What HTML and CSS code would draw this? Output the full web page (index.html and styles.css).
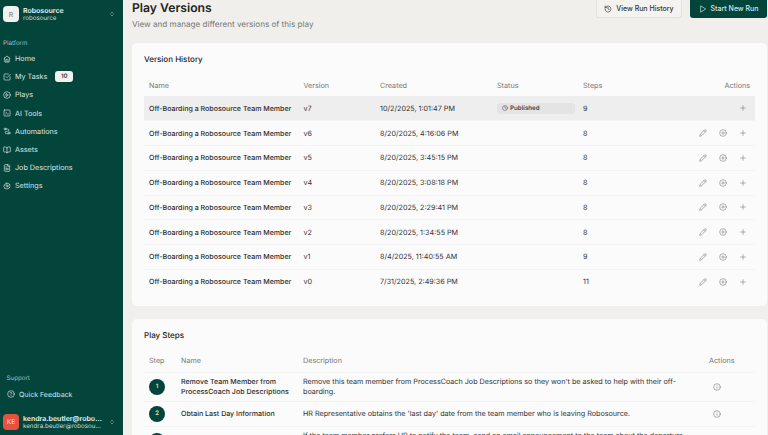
FILE: index.html
```html
<!DOCTYPE html>
<html lang="en">
<head>
  <meta charset="UTF-8" />
  <meta name="viewport" content="width=device-width,initial-scale=1.0" />
  <title>Play Versions</title>
  <link rel="stylesheet" href="styles.css">
</head>
<body>
  <svg class="icon-defs" width="0" height="0">
    <defs>
      <g id="i-home"><path d="M3 10.500 12 3l9 7.500"/><path d="M5 9v11a1 1 0 0 0 1 1h12a1 1 0 0 0 1-1V9"/><path d="M9 21v-7a1 1 0 0 1 1-1h4a1 1 0 0 1 1 1v7"/></g>
      <g id="i-tasks"><path d="M21 11v8a2 2 0 0 1-2 2H5a2 2 0 0 1-2-2V5a2 2 0 0 1 2-2h11"/><path d="m9 11 3 3L22 4"/></g>
      <g id="i-play-circle"><circle cx="12" cy="12" r="10"/><path d="m10 8 6 4-6 4z"/></g>
      <g id="i-tools"><rect x="3" y="3" width="18" height="18" rx="2"/><path d="m8 9 3 3-3 3"/><path d="M13 15h3"/></g>
      <g id="i-auto"><circle cx="6" cy="6" r="3"/><circle cx="18" cy="18" r="3"/><path d="M9 6h5a3.500 3.500 0 0 1 0 7h-4a3.500 3.500 0 0 0 0 7h5"/></g>
      <g id="i-book"><path d="M12 7v14"/><path d="M3 18a1 1 0 0 1-1-1V4a1 1 0 0 1 1-1h5a4 4 0 0 1 4 4 4 4 0 0 1 4-4h5a1 1 0 0 1 1 1v13a1 1 0 0 1-1 1h-6a3 3 0 0 0-3 3 3 3 0 0 0-3-3z"/></g>
      <g id="i-file"><path d="M15 2H6a2 2 0 0 0-2 2v16a2 2 0 0 0 2 2h12a2 2 0 0 0 2-2V7z"/><path d="M14 2v5h6"/><path d="M8 13h8M8 17h8M8 9h2"/></g>
      <g id="i-gear"><circle cx="12" cy="12" r="3"/><path d="M12 2.500l2 2.500 3-1 1 3 3 1-1 3 1.500 2-2.500 2 .5 3-3 .5-1.500 2.500-3-1.500-3 1.500L7 19.500l-3-.5.5-3L2.500 14 4 12 3 9l3-1 1-3 3 1z"/></g>
      <g id="i-help"><circle cx="12" cy="12" r="10"/><path d="M9.100 9a3 3 0 0 1 5.800 1c0 2-3 3-3 3"/><path d="M12 17h.01"/></g>
      <g id="i-updown"><path d="m7 9 5-5 5 5"/><path d="m7 15 5 5 5-5"/></g>
      <g id="i-history"><path d="M3 12a9 9 0 1 0 3-6.700L3 8"/><path d="M3 3v5h5"/><path d="M12 7v5l4 2"/></g>
      <g id="i-play"><path d="m6 3 14 9-14 9z"/></g>
      <g id="i-pencil"><path d="M17 3a2.800 2.800 0 0 1 4 4L7.500 20.500 2 22l1.500-5.500z"/><path d="m15 5 4 4"/></g>
      <g id="i-add"><circle cx="12" cy="12" r="10"/><path d="M8 12h8"/><path d="M12 8v8"/></g>
      <g id="i-plus"><path d="M5 12h14"/><path d="M12 5v14"/></g>
      <g id="i-info"><circle cx="12" cy="12" r="10"/><path d="M12 16v-4"/><path d="M12 8h.01"/></g>
      <g id="i-clock"><circle cx="12" cy="12" r="10"/><path d="M12 6v6l4 2"/></g>
    </defs>
  </svg>

  <div class="app">
    <aside class="sidebar">
      <div class="account">
        <div class="avatar">R</div>
        <div class="account-text">
          <div class="account-name">Robosource</div>
          <div class="account-sub">robosource</div>
        </div>
        <svg class="ico updown" viewBox="0 0 24 24"><use href="#i-updown"/></svg>
      </div>

      <div class="nav-label">Platform</div>
      <nav class="nav">
        <a class="nav-item"><svg class="ico" viewBox="0 0 24 24"><use href="#i-home"/></svg>Home</a>
        <a class="nav-item"><svg class="ico" viewBox="0 0 24 24"><use href="#i-tasks"/></svg>My Tasks<span class="count">10</span></a>
        <a class="nav-item"><svg class="ico" viewBox="0 0 24 24"><use href="#i-play-circle"/></svg>Plays</a>
        <a class="nav-item"><svg class="ico" viewBox="0 0 24 24"><use href="#i-tools"/></svg>AI Tools</a>
        <a class="nav-item"><svg class="ico" viewBox="0 0 24 24"><use href="#i-auto"/></svg>Automations</a>
        <a class="nav-item"><svg class="ico" viewBox="0 0 24 24"><use href="#i-book"/></svg>Assets</a>
        <a class="nav-item"><svg class="ico" viewBox="0 0 24 24"><use href="#i-file"/></svg>Job Descriptions</a>
        <a class="nav-item"><svg class="ico" viewBox="0 0 24 24"><use href="#i-gear"/></svg>Settings</a>
      </nav>

      <div class="support">
        <div class="support-label">Support</div>
        <a class="nav-item"><svg class="ico" viewBox="0 0 24 24"><use href="#i-help"/></svg>Quick Feedback</a>
      </div>

      <div class="account user">
        <div class="avatar red">KE</div>
        <div class="account-text">
          <div class="account-name">kendra.beutler@robosource.net</div>
          <div class="account-sub">kendra.beutler@robosource.net</div>
        </div>
        <svg class="ico updown" viewBox="0 0 24 24"><use href="#i-updown"/></svg>
      </div>
    </aside>

    <main class="main">
      <div class="page-head">
        <div>
          <h1>Play Versions</h1>
          <p>View and manage different versions of this play</p>
        </div>
        <div class="page-btns">
          <button class="btn"><svg class="ico" viewBox="0 0 24 24"><use href="#i-history"/></svg>View Run History</button>
          <button class="btn primary"><svg class="ico" viewBox="0 0 24 24"><use href="#i-play"/></svg>Start New Run</button>
        </div>
      </div>

      <section class="card">
        <h2>Version History</h2>
        <table class="versions">
          <thead>
            <tr><th class="c-name">Name</th><th class="c-ver">Version</th><th class="c-created">Created</th><th class="c-status">Status</th><th class="c-steps">Steps</th><th class="c-actions">Actions</th></tr>
          </thead>
          <tbody id="version-rows"></tbody>
        </table>
      </section>

      <section class="card">
        <h2>Play Steps</h2>
        <table class="steps">
          <thead>
            <tr><th class="s-step">Step</th><th class="s-name">Name</th><th>Description</th><th class="s-actions">Actions</th></tr>
          </thead>
          <tbody>
            <tr>
              <td><span class="num">1</span></td>
              <td class="strong">Remove Team Member from ProcessCoach Job Descriptions</td>
              <td>Remove this team member from ProcessCoach Job Descriptions so they won't be asked to help with their off-boarding.</td>
              <td class="s-actions"><svg class="ico act" viewBox="0 0 24 24"><use href="#i-info"/></svg></td>
            </tr>
            <tr>
              <td><span class="num">2</span></td>
              <td class="strong">Obtain Last Day Information</td>
              <td>HR Representative obtains the 'last day' date from the team member who is leaving Robosource.</td>
              <td class="s-actions"><svg class="ico act" viewBox="0 0 24 24"><use href="#i-info"/></svg></td>
            </tr>
            <tr>
              <td><span class="num">3</span></td>
              <td class="strong">Notify the Team</td>
              <td>If the team member prefers HR to notify the team, send an email announcement to the team about the departure. The</td>
              <td class="s-actions"><svg class="ico act" viewBox="0 0 24 24"><use href="#i-info"/></svg></td>
            </tr>
          </tbody>
        </table>
      </section>
    </main>
  </div>

  <script>
    const versions = [
      ['v7', '10/2/2025, 1:01:47 PM', 9],
      ['v6', '8/20/2025, 4:16:06 PM', 8],
      ['v5', '8/20/2025, 3:45:15 PM', 8],
      ['v4', '8/20/2025, 3:08:18 PM', 8],
      ['v3', '8/20/2025, 2:29:41 PM', 8],
      ['v2', '8/20/2025, 1:34:55 PM', 8],
      ['v1', '8/4/2025, 11:40:55 AM', 9],
      ['v0', '7/31/2025, 2:49:36 PM', 11]
    ];

    function icon(name) {
      return `<svg class="ico act" viewBox="0 0 24 24"><use href="#${name}"/></svg>`;
    }

    document.getElementById('version-rows').innerHTML = versions.map((v, i) => {
      const status = i === 0
        ? `<span class="badge"><svg class="ico" viewBox="0 0 24 24"><use href="#i-clock"/></svg>Published</span>`
        : '';
      const edit = i === 0 ? '' : icon('i-pencil') + icon('i-add');
      return `<tr class="${i === 0 ? 'current' : ''}">
        <td class="strong">Off-Boarding a Robosource Team Member</td>
        <td>${v[0]}</td><td>${v[1]}</td><td>${status}</td><td>${v[2]}</td>
        <td class="c-actions"><div class="acts">${edit}${icon('i-plus')}</div></td>
      </tr>`;
    }).join('');
  </script>
</body>
</html>
```

FILE: styles.css
```css
* { box-sizing: border-box; }
html, body {
  margin: 0;
  height: 100%;
  overflow: hidden;
}
body {
  font-family: Inter, "Liberation Sans", sans-serif;
  background-color: #f0efeb;
  color: #2b2b2b;
  font-size: 7.200px;
  text-rendering: geometricPrecision;
}
.icon-defs { position: absolute; }
.app {
  display: flex;
  height: 435px;
  overflow: hidden;
}
.ico {
  display: block;
  width: 8px;
  height: 8px;
  fill: none;
  stroke: currentColor;
  stroke-width: 2;
  stroke-linecap: round;
  stroke-linejoin: round;
  flex: none;
}

/* sidebar */
.sidebar {
  width: 123px;
  flex: none;
  background-color: #03443b;
  color: #dfe8e5;
  display: flex;
  flex-direction: column;
}
.account {
  display: flex;
  align-items: center;
  padding: 0 8px 0 3px;
  height: 16px;
  margin-top: 6px;
  flex: none;
}
.avatar {
  width: 16px;
  height: 16px;
  border-radius: 4px;
  background-color: #f1f1ef;
  color: #777;
  font-size: 7px;
  display: flex;
  align-items: center;
  justify-content: center;
  flex: none;
}
.avatar.red {
  background-color: #e8503f;
  color: #fbe3df;
  font-size: 6.500px;
}
.account-text {
  margin-left: 4px;
  padding-top: 1.500px;
  min-width: 0;
  flex: 1;
}
.account-name {
  font-size: 7px;
  line-height: 8px;
  font-weight: 600;
  color: #f2f5f4;
  white-space: nowrap;
  overflow: hidden;
  text-overflow: ellipsis;
}
.account-sub {
  font-size: 6.200px;
  line-height: 8px;
  color: #d3dfdb;
  white-space: nowrap;
  overflow: hidden;
  text-overflow: ellipsis;
}
.updown {
  width: 6px;
  height: 6px;
  margin-left: 6px;
  color: #b5c8c3;
}
.nav-label {
  margin: 15px 0 0 3px;
  padding-top: 2px;
  font-size: 6.200px;
  line-height: 10px;
  color: #a8bfb9;
}
.nav {
  margin-top: 0.500px;
}
.nav-item {
  display: flex;
  align-items: center;
  height: 18.200px;
  padding-left: 2.500px;
  gap: 4.500px;
  font-size: 7.200px;
  color: #dbe5e2;
}
.count {
  margin-left: 3.500px;
  width: 18px;
  height: 11px;
  border-radius: 3px;
  background-color: #f2f2f0;
  color: #333;
  font-size: 6px;
  font-weight: 600;
  display: flex;
  align-items: center;
  justify-content: center;
}
.support {
  margin-top: auto;
  padding-left: 4.500px;
}
.support-label {
  font-size: 6.200px;
  line-height: 10px;
  color: #a8bfb9;
  padding-left: 2px;
}
.support .nav-item {
  height: 18px;
  margin-top: 1px;
  gap: 4px;
  font-size: 7px;
}
.user {
  margin: 11px 0 5px;
}

/* main column */
.main {
  flex: 1;
  min-width: 0;
  padding: 0 1px 0 9px;
}
.page-head {
  display: flex;
  justify-content: space-between;
  height: 43px;
}
.page-head h1 {
  margin: 0;
  font-size: 12.200px;
  line-height: 15px;
  font-weight: 600;
  color: #222;
}
.page-head p {
  margin: 3px 0 0;
  font-size: 8.100px;
  line-height: 12px;
  color: #777;
}
.page-btns {
  display: flex;
  gap: 8px;
  align-items: flex-start;
}
.btn {
  height: 18px;
  padding: 0 7.500px;
  border: 1px solid #e3e2de;
  border-top: none;
  border-radius: 0 0 3px 3px;
  background-color: #f4f3f0;
  color: #333;
  font: 500 7px Inter, sans-serif;
  display: flex;
  align-items: center;
  gap: 4px;
}
.btn.primary {
  background-color: #03443b;
  border-color: #03443b;
  color: #dfe8e5;
}
.card {
  background-color: #fbfbfb;
  border-radius: 5px;
  padding: 10px 12px 12px;
  margin-bottom: 13px;
}
.card h2 {
  margin: 0;
  font-size: 8px;
  line-height: 12px;
  font-weight: 500;
  color: #222;
}
table {
  border-collapse: collapse;
  table-layout: fixed;
  width: 100%;
  font-size: 7.200px;
}
th {
  font-weight: 400;
  color: #777;
  text-align: left;
  padding: 0 5px;
}
td {
  padding: 0 5px;
  color: #333;
}
td.strong { font-size: 7.050px; font-weight: 500; color: #2b2b2b; }

/* version table */
.versions { margin-top: 9px; }
.versions thead tr { height: 22px; }
.versions tbody tr { height: 24.750px; border-bottom: 1px solid #f4f4f4; }
.versions tbody tr:last-child { border-bottom: none; }
.versions tr.current { background-color: #eeeeee; }
.versions td.strong { white-space: nowrap; }
.c-name { width: 154.500px; }
.c-ver { width: 76.500px; }
.c-created { width: 117px; }
.c-status { width: 86px; }
.c-steps { width: 86px; }
.c-actions { text-align: right; }
.acts {
  display: flex;
  justify-content: flex-end;
  gap: 12px;
  color: #777;
  padding-right: 3px;
}
.act { stroke-width: 1.700; color: #777; }
.badge {
  display: flex;
  align-items: center;
  gap: 2px;
  width: 78px;
  height: 11px;
  padding-left: 5px;
  border-radius: 3px;
  background-color: #e4e4e4;
  font-size: 6.200px;
  font-weight: 600;
  color: #444;
}
.badge .ico { width: 6px; height: 6px; }

/* steps table */
.steps { margin-top: 8px; }
.steps thead tr { height: 23px; border-bottom: 1px solid #f4f4f4; }
.steps tbody tr { border-bottom: 1px solid #f4f4f4; }
.steps td { padding-top: 4px; padding-bottom: 4px; line-height: 10px; }
.s-step { width: 32px; }
.s-name { width: 122px; }
.steps .s-actions { width: 51px; }
.steps td.s-actions { padding-left: 9px; }
.num {
  width: 16px;
  height: 16px;
  border-radius: 50%;
  background-color: #03443b;
  color: #dfe8e5;
  font-size: 6px;
  font-weight: 600;
  display: flex;
  align-items: center;
  justify-content: center;
}
```
